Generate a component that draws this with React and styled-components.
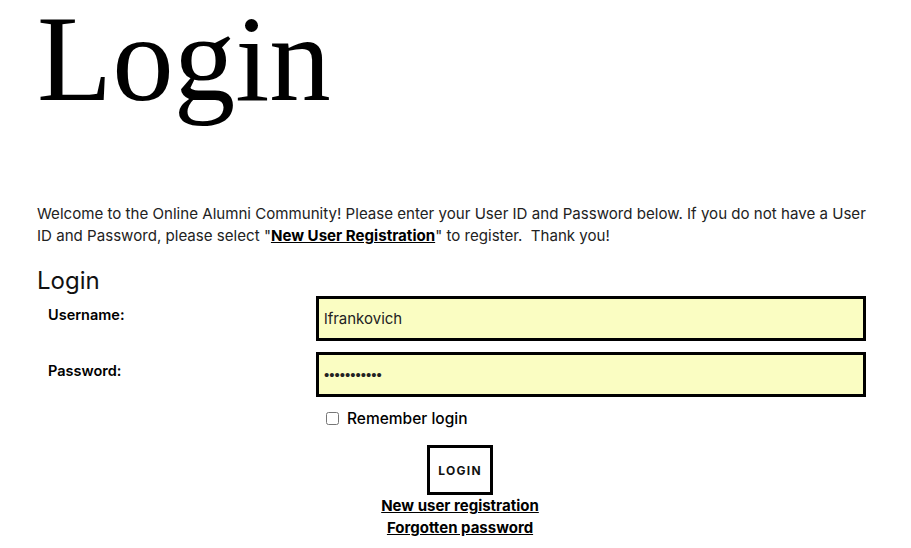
import React from "react";
import styled, { createGlobalStyle } from "styled-components";

const Global = createGlobalStyle`
  html, body { margin: 0; padding: 0; background: #fff; }
  body { font-family: Inter, "Liberation Sans", sans-serif; color: #222; }
`;

const Page = styled.div`
  padding: 0 45px 0 37px;
`;

const Title = styled.h1`
  margin: 0;
  font-family: "Liberation Serif", "Times New Roman", serif;
  font-weight: normal;
  font-size: 123px;
  line-height: 117px;
  color: #000;
`;

const Intro = styled.p`
  margin: 86px 0 0;
  font-size: 15.1px;
  line-height: 22px;
  color: #222;
`;

const StrongLink = styled.a`
  font-weight: 700;
  color: #000;
  text-decoration: underline;
`;

const FormTitle = styled.h2`
  margin: 19px 0 0;
  font-size: 24px;
  line-height: 30px;
  font-weight: 400;
  color: #111;
`;

const FormGrid = styled.div`
  display: grid;
  grid-template-columns: 279px 1fr;
  row-gap: 11px;
`;

const Label = styled.label`
  padding: 10px 0 0 11px;
  font-size: 14.5px;
  font-weight: 600;
  color: #000;
`;

const Input = styled.input`
  box-sizing: border-box;
  height: 45px;
  width: 100%;
  margin: 0;
  border: 3px solid #000;
  background: #fafdc2;
  padding: 0 5px;
  font-family: ${(p) => (p.type === "password" ? `"Liberation Sans", Arial, sans-serif` : `Inter, "Liberation Sans", sans-serif`)};
  font-size: 15px;
  color: #222;
  outline: none;
`;

const RememberRow = styled.label`
  grid-column: 2;
  display: flex;
  align-items: center;
  gap: 8px;
  margin-top: 1px;
  padding-left: 10px;
  font-size: 15.5px;
  font-weight: 500;
  color: #000;
`;

const Check = styled.input`
  margin: 0;
  width: 13px;
  height: 13px;
`;

const Actions = styled.div`
  display: flex;
  flex-direction: column;
  align-items: center;
  padding-left: 17px;
  margin-top: 17px;
`;

const Button = styled.button`
  box-sizing: border-box;
  width: 66px;
  height: 50px;
  border: 3px solid #000;
  background: #fff;
  font-family: Inter, "Liberation Sans", sans-serif;
  font-size: 12px;
  font-weight: 700;
  letter-spacing: 1.3px;
  color: #111;
  padding: 0;
  margin: 0;
`;

const FooterLink = styled.a`
  font-size: 15px;
  line-height: 22px;
  font-weight: 700;
  color: #000;
  text-decoration: underline;
`;

export default function App() {
  return (
    <Page>
      <Global />
      <Title>Login</Title>
      <Intro>
        Welcome to the Online Alumni Community! Please enter your User ID and Password below. If you do not have a User
        <br />
        ID and Password, please select "<StrongLink href="#">New User Registration</StrongLink>" to register.&nbsp; Thank you!
      </Intro>
      <FormTitle>Login</FormTitle>
      <FormGrid>
        <Label htmlFor="u">Username:</Label>
        <Input id="u" defaultValue="lfrankovich" />
        <Label htmlFor="p">Password:</Label>
        <Input id="p" type="password" defaultValue="lfrankovich" />
        <RememberRow>
          <Check type="checkbox" />
          Remember login
        </RememberRow>
      </FormGrid>
      <Actions>
        <Button>LOGIN</Button>
        <FooterLink href="#">New user registration</FooterLink>
        <FooterLink href="#">Forgotten password</FooterLink>
      </Actions>
    </Page>
  );
}
